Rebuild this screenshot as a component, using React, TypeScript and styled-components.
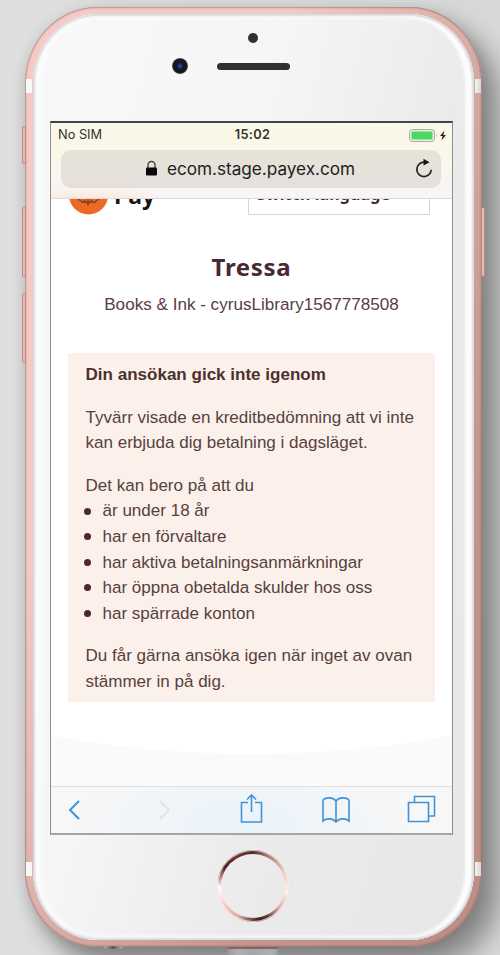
import React from 'react';
import styled, { createGlobalStyle } from 'styled-components';

const GlobalStyle = createGlobalStyle`
  * { box-sizing: border-box; }
  body { margin: 0; background: #d9d9d9; font-family: "Liberation Sans", Arial, sans-serif; }
`;

const Stage = styled.main`
  position: relative;
  width: 500px;
  height: 955px;
  padding: 7px 18px 0 25px;
  overflow: hidden;
  background: linear-gradient(90deg, #dfdfdf 0%, #dadada 50%, #d8d8d8 100%);
`;

const Phone = styled.div`
  position: relative;
  width: 457px;
  height: 940px;
  padding: 7px 8px;
  border-radius: 72px / 76px;
  background: linear-gradient(115deg, #f6cac6 0%, #f4c8c3 30%, #d4a6a0 56%, #c4958e 75%, #bb8d86 100%);
  box-shadow:
    inset 0 0 2px 0.5px rgba(100, 75, 72, 0.7),
    16px 18px 26px 2px rgba(0, 0, 0, 0.36),
    0 4px 14px rgba(0, 0, 0, 0.13);
`;

const Face = styled.div`
  position: relative;
  display: flex;
  flex-direction: column;
  align-items: center;
  width: 441px;
  height: 926px;
  border-radius: 65px / 69px;
  background: linear-gradient(105deg, #f8f8f8 0%, #f6f6f6 36%, #ebebeb 64%, #e7e7e7 100%);
  box-shadow:
    inset 0 0 2px 2px rgba(205, 209, 211, 0.8),
    inset -6px 0 3px 3px #fdfdfd,
    inset 4px 0 5px 3px #fdfdfd;
`;

const Speakers = styled.div`
  display: flex;
  flex-direction: column;
  align-items: center;
  width: 100%;
  height: 107px;
  padding: 19px 1px 0 0;
`;
const Sensor = styled.i`
  width: 10px;
  height: 10px;
  border-radius: 50%;
  background: #303030;
`;
const EarpieceRow = styled.div`
  display: grid;
  grid-template-columns: 16px 73px;
  column-gap: 29px;
  align-items: center;
  margin: 15px 45px 0 0;
`;
const Camera = styled.i`
  width: 16px;
  height: 16px;
  border-radius: 50%;
  background: radial-gradient(circle, #244994 0 7%, #11172a 30%, #14171d 58%, #505052 68%, #77787a 72%);
`;
const Earpiece = styled.i`
  height: 7px;
  border-radius: 4px;
  background: #303030;
`;

const Display = styled.section`
  display: flex;
  flex-direction: column;
  width: 403px;
  height: 714px;
  margin-left: -4px;
  border: 1px solid #8b8f8d;
  border-top: 2px solid #444;
  border-bottom: 2px solid #a5a5a5;
  background: #fff;
  overflow: hidden;
`;

const BrowserBar = styled.header`
  flex: none;
  height: 76px;
  border-bottom: 1px solid #dedada;
  background:
    radial-gradient(ellipse at 36px 85px, rgba(255, 211, 182, 0.6), transparent 95px),
    linear-gradient(#fbf8e8 0%, #faf7ea 48%, #f8f5f5 100%);
`;
const StatusBar = styled.div`
  display: grid;
  grid-template-columns: 1fr auto 1fr;
  align-items: center;
  height: 27px;
  padding: 0 5px 4px 7px;
  font: 12.8px Inter, sans-serif;
  color: #343330;
`;
const Clock = styled.span`
  font-weight: 600;
  letter-spacing: 0.3px;
`;
const Power = styled.svg`
  justify-self: end;
  width: 40px;
  height: 16px;
`;
const AddressBar = styled.div`
  display: flex;
  align-items: center;
  height: 38px;
  margin: 0 11px 0 10px;
  padding: 0 7px 1px 84px;
  border-radius: 10px;
  color: #201f1e;
  background:
    radial-gradient(ellipse at 28px 45px, rgba(241, 210, 189, 0.65), transparent 110px),
    linear-gradient(#e7e3d6, #e5e0df);
`;
const Lock = styled.svg`
  width: 13px;
  height: 17px;
`;
const Domain = styled.span`
  margin-left: 9px;
  font: 17.2px Inter, sans-serif;
  letter-spacing: -0.03px;
  white-space: nowrap;
`;
const Reload = styled.svg`
  width: 20px;
  height: 22px;
  margin-left: auto;
`;

const WebPage = styled.div`
  flex: 1;
  overflow: hidden;
  background:
    radial-gradient(ellipse 330px 90px at 50% 465px, #fff 99.5%, transparent 100%),
    linear-gradient(#fff 500px, #fafafa 500px);
`;
const ClippedHeader = styled.div`
  display: flex;
  justify-content: space-between;
  align-items: flex-end;
  height: 16px;
  padding: 0 22px 0 18px;
`;
const Brand = styled.div`
  display: flex;
  align-items: flex-end;
`;
const BrandMark = styled.svg`
  width: 39px;
  height: 40px;
`;
const BrandName = styled.b`
  margin: 0 0 5px 6px;
  font: 700 23px/30px "Noto Sans", sans-serif;
  color: #171413;
`;
const LanguageSelect = styled.div`
  display: flex;
  align-items: center;
  justify-content: space-between;
  width: 182px;
  height: 43px;
  padding: 0 14px 0 8px;
  border: 1px solid #d6d4d4;
  color: #442b2b;
  font: 700 16px "Noto Sans", sans-serif;
  letter-spacing: 0.1px;
`;
const Chevron = styled.svg`
  width: 12px;
  height: 8px;
`;
const Title = styled.h1`
  margin: 35px 0 0;
  font: 700 24px/34px "Noto Sans", sans-serif;
  letter-spacing: 0.7px;
  text-align: center;
  color: #482832;
`;
const Merchant = styled.p`
  margin: 8px 0 0;
  font-size: 17.1px;
  line-height: 26px;
  text-align: center;
  color: #583d44;
`;
const Notice = styled.article`
  width: 367px;
  height: 349px;
  margin: 35px 0 0 17px;
  padding: 9px 0 0 17.5px;
  background: #fcf1ea;
  font-size: 17.05px;
  line-height: 25.6px;
  white-space: nowrap;
  color: #573f3f;
`;
const NoticeTitle = styled.h2`
  margin: 0 0 17px;
  font-size: 17.05px;
  line-height: 25.6px;
  color: #4c302f;
`;
const Paragraph = styled.p<{ $gap?: number }>`
  margin: 0 0 ${({ $gap = 17 }) => $gap}px;
`;
const Reasons = styled.ul`
  margin: 0 0 17px;
  padding: 0;
  list-style: none;
`;
const Reason = styled.li`
  display: flex;
  align-items: center;
  gap: 12px;
  &::before {
    content: '';
    width: 7px;
    height: 7px;
    margin-left: -2px;
    border-radius: 50%;
    background: #4b2829;
  }
`;

const Toolbar = styled.nav`
  display: flex;
  justify-content: space-between;
  align-items: center;
  flex: none;
  height: 47px;
  padding: 0 16px;
  border-top: 1px solid #dfdfe0;
  background: radial-gradient(ellipse 170px 70px at 190px 38px, #eaf3fa, #f1f5f8 60%, #f7f7f8 100%);
`;
const ToolIcon = styled.svg<{ $muted?: boolean }>`
  width: 30px;
  height: 32px;
  fill: none;
  stroke: ${({ $muted }) => ($muted ? '#dcdfe3' : '#4292d5')};
  stroke-width: 1.6;
`;

const HomeButton = styled.div`
  width: 72px;
  height: 72px;
  margin: 15px 0 0 -2px;
  padding: 4px;
  border-radius: 50%;
  background: conic-gradient(#512d2b 0deg, #a77771 25deg, #f3c9c3 65deg, #fff0ed 100deg, #e1afa9 130deg, #673832 155deg, #3b1d1a 170deg, #dca79e 205deg, #f7cbc5 235deg, #fff 268deg, #d6aba5 280deg, #4c1a19 305deg, #6e3a36 330deg, #512d2b 360deg);
  box-shadow: inset 0 0 0 1px rgba(245, 240, 240, 0.75);
  &::before {
    content: '';
    display: block;
    width: 64px;
    height: 64px;
    border-radius: 50%;
    background: linear-gradient(110deg, #eee, #e9e9e9);
  }
`;
const AntennaBand = styled.i<{ $right?: boolean; $top: number }>`
  position: absolute;
  top: ${({ $top }) => $top}px;
  ${({ $right }) => ($right ? 'right: 1px;' : 'left: 1px;')}
  width: 6px;
  height: 14px;
  background: ${({ $right }) => ($right ? 'linear-gradient(90deg, #f3f3f3, #d7d7d7)' : '#faf8f8')};
`;
const SideButton = styled.i<{ $right?: boolean; $top: number; $height: number }>`
  position: absolute;
  top: ${({ $top }) => $top}px;
  ${({ $right }) => ($right ? 'right: -3px;' : 'left: -3px;')}
  width: 4px;
  height: ${({ $height }) => $height}px;
  border: 1px solid #b98c87;
  border-radius: 2px;
  background: #e9b9b3;
`;
const Cable = styled.i`
  position: absolute;
  left: 228px;
  bottom: 0;
  width: 50px;
  height: 8px;
  border-top: 2px solid #846664;
  background: linear-gradient(90deg, #999, #b0b0b0 20%, #a5a5a5 50%, #b0b0b0 88%, #999);
`;
const AudioJack = styled.i`
  position: absolute;
  left: 103px;
  top: 946px;
  width: 20px;
  height: 3px;
  border-radius: 50%;
  background: linear-gradient(90deg, #bbb, #555 50%, #bbb);
`;

const reasons = [
  'är under 18 år',
  'har en förvaltare',
  'har aktiva betalningsanmärkningar',
  'har öppna obetalda skulder hos oss',
  'har spärrade konton',
];

export default function App() {
  return (
    <>
      <GlobalStyle />
      <Stage>
        <Phone>
          <SideButton $top={119} $height={38} />
          <SideButton $top={200} $height={70} />
          <SideButton $top={286} $height={70} />
          <SideButton $right $top={200} $height={70} />
          <AntennaBand $top={72} />
          <AntennaBand $right $top={72} />
          <AntennaBand $top={855} />
          <AntennaBand $right $top={855} />
          <Face>
            <Speakers>
              <Sensor />
              <EarpieceRow>
                <Camera />
                <Earpiece />
              </EarpieceRow>
            </Speakers>
            <Display>
              <BrowserBar>
                <StatusBar>
                  <span>No SIM</span>
                  <Clock>15:02</Clock>
                  <Power viewBox="0 0 40 16">
                    <rect x="2.5" y="2.5" width="25" height="12" rx="3" fill="#e7f0dd" stroke="#a9aca1" />
                    <rect x="4.5" y="4.5" width="21" height="8" rx="1" fill="#4dd865" />
                    <path d="M29 7q1.5 1.5 0 3z" fill="#a9aca1" />
                    <path d="M37.5 3.5 33 9h2.6l-1.2 4.5L39 8h-2.7z" fill="#242321" />
                  </Power>
                </StatusBar>
                <AddressBar>
                  <Lock viewBox="0 0 13 17">
                    <path d="M3 8V5a3.5 3.5 0 0 1 7 0v3" fill="none" stroke="#4a4540" strokeWidth="1.4" />
                    <rect x="1" y="7.5" width="11" height="8" rx="1.2" fill="#080808" />
                  </Lock>
                  <Domain>ecom.stage.payex.com</Domain>
                  <Reload viewBox="0 0 20 22">
                    <path d="M12 4.2H10a7.2 7.2 0 1 0 7.2 7.5" fill="none" stroke="#252422" strokeWidth="1.7" />
                    <path d="m9.5.8 6 3.5-6 3.3z" fill="#151515" />
                  </Reload>
                </AddressBar>
              </BrowserBar>
              <WebPage>
                <ClippedHeader>
                  <Brand>
                    <BrandMark viewBox="0 0 39 40">
                      <circle cx="19.5" cy="20" r="19.5" fill="#ed6926" />
                      <path d="M19 5v26M12 27h15M15 25l4 4 4-4M9 24l6 4M30 24l-6 4" stroke="#8d431f" strokeWidth="1.5" fill="none" />
                    </BrandMark>
                    <BrandName>Pay</BrandName>
                  </Brand>
                  <LanguageSelect>
                    Switch language
                    <Chevron viewBox="0 0 12 8">
                      <path d="m1 1 5 5 5-5" fill="none" stroke="#442b2b" strokeWidth="2.5" />
                    </Chevron>
                  </LanguageSelect>
                </ClippedHeader>
                <Title>Tressa</Title>
                <Merchant>Books &amp; Ink - cyrusLibrary1567778508</Merchant>
                <Notice>
                  <NoticeTitle>Din ansökan gick inte igenom</NoticeTitle>
                  <Paragraph>
                    Tyvärr visade en kreditbedömning att vi inte
                    <br />
                    kan erbjuda dig betalning i dagsläget.
                  </Paragraph>
                  <Paragraph $gap={0}>Det kan bero på att du</Paragraph>
                  <Reasons>
                    {reasons.map((reason) => (
                      <Reason key={reason}>{reason}</Reason>
                    ))}
                  </Reasons>
                  <Paragraph>
                    Du får gärna ansöka igen när inget av ovan
                    <br />
                    stämmer in på dig.
                  </Paragraph>
                </Notice>
              </WebPage>
              <Toolbar>
                <ToolIcon viewBox="0 0 30 32">
                  <path d="m12 7-9 9 9 9" strokeWidth="2" />
                </ToolIcon>
                <ToolIcon $muted viewBox="0 0 30 32">
                  <path d="m8 7 9 9-9 9" />
                </ToolIcon>
                <ToolIcon viewBox="0 0 30 32">
                  <path d="M11 8.5H4.5V28h20V8.5H18M14.5 18V1.5M10 5.5l4.5-4.5L19 5.5" />
                </ToolIcon>
                <ToolIcon viewBox="0 0 30 32">
                  <path d="M15 7C12 3 5 3 2 6v21c3-3 10-3 13 1 3-4 10-4 13-1V6c-3-3-10-3-13 1zv21" />
                </ToolIcon>
                <ToolIcon viewBox="0 0 30 32">
                  <path d="M2.5 8.5h20v19h-20zM8.5 8V2.5h20v19.5H23" />
                </ToolIcon>
              </Toolbar>
            </Display>
            <HomeButton />
          </Face>
        </Phone>
        <Cable />
        <AudioJack />
      </Stage>
    </>
  );
}
